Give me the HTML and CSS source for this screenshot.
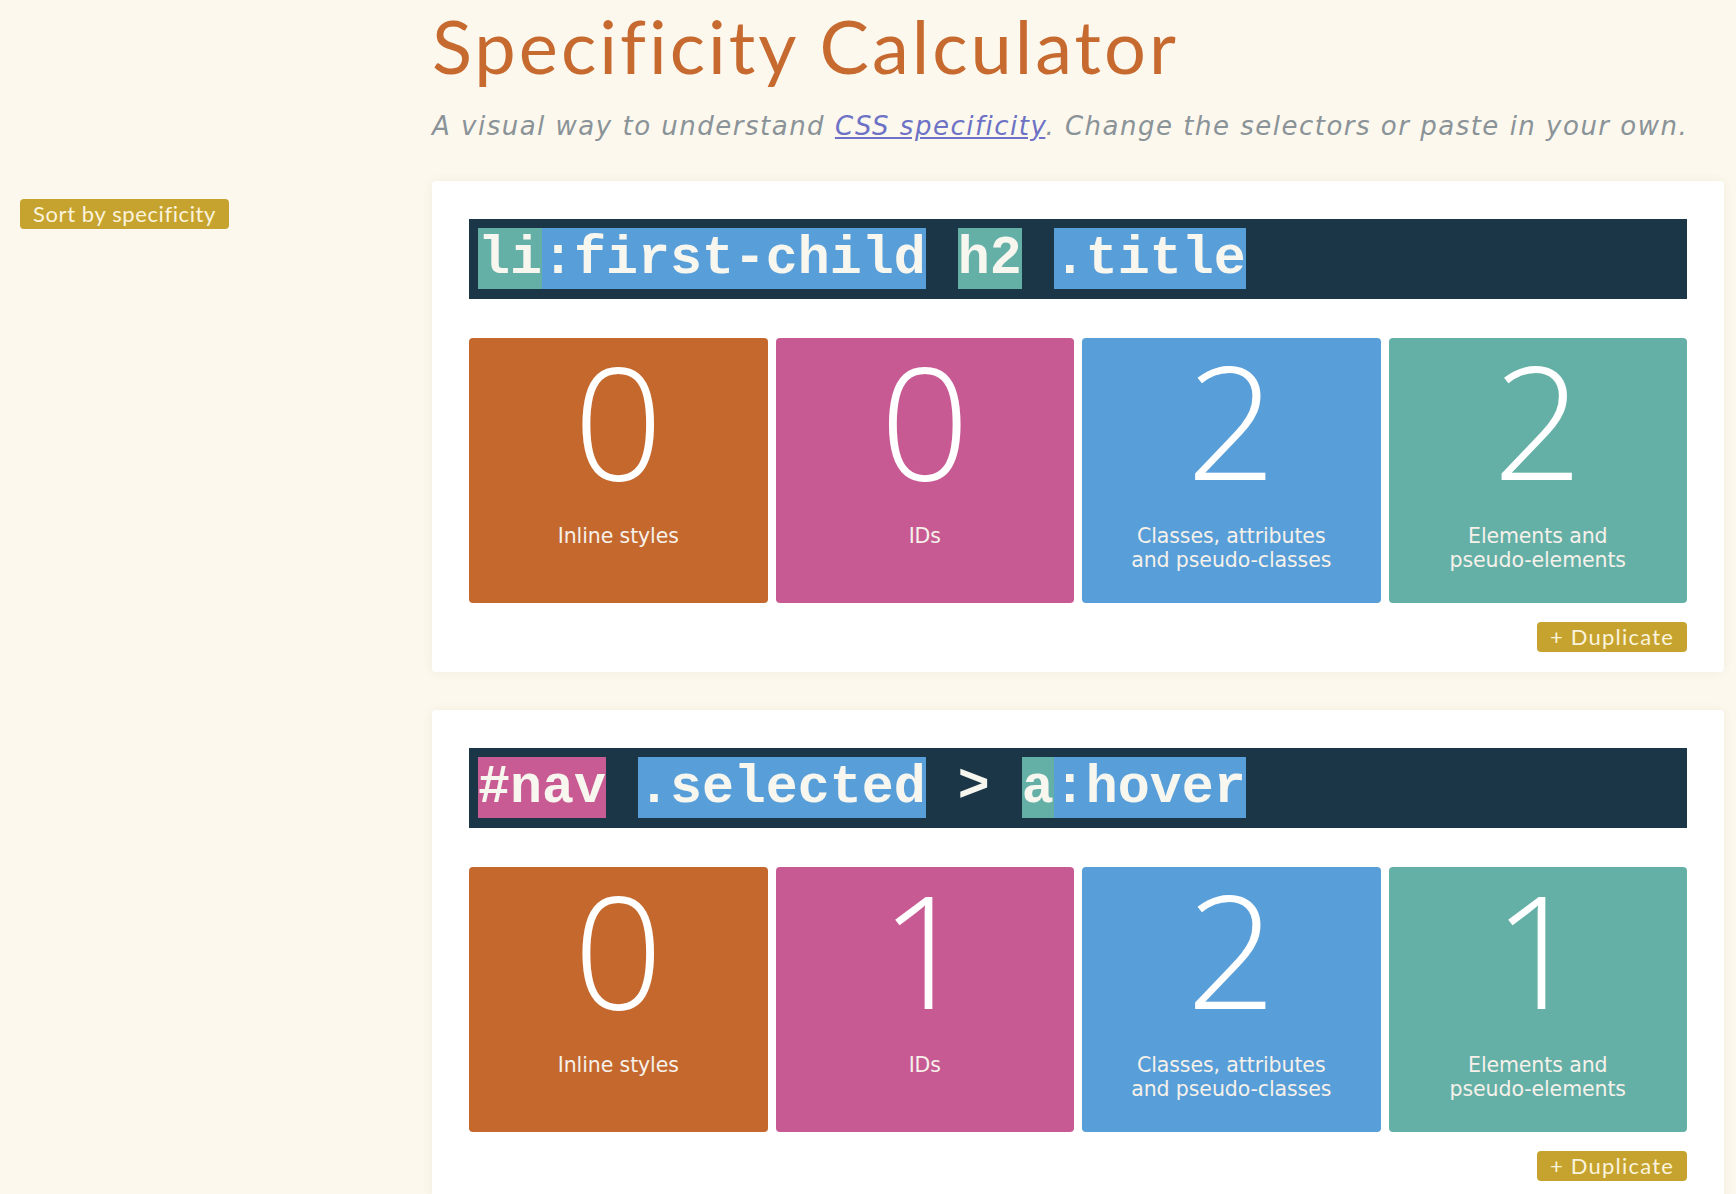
FILE: index.html
```html
<!DOCTYPE html>
<html>
<head>
<meta charset="utf-8">
<title>Specificity Calculator</title>
<link rel="stylesheet" href="styles.css">
</head>
<body>
<div class="page">
  <aside class="sidebar">
    <button class="btn sort-btn">Sort by specificity</button>
  </aside>
  <main class="main">
    <header class="header">
      <h1 class="title">Specificity Calculator</h1>
      <p class="subtitle">A visual way to understand <a href="#" class="link">CSS specificity</a>. Change the selectors or paste in your own.</p>
    </header>

    <section class="card">
      <div class="selector"><span class="hl el">li</span><span class="hl cls">:first-child</span> <span class="hl el">h2</span> <span class="hl cls">.title</span></div>
      <div class="scores">
        <div class="score inline"><div class="num">0</div><div class="label">Inline styles</div></div>
        <div class="score ids"><div class="num">0</div><div class="label">IDs</div></div>
        <div class="score classes"><div class="num">2</div><div class="label">Classes, attributes<br>and pseudo-classes</div></div>
        <div class="score elements"><div class="num">2</div><div class="label">Elements and<br>pseudo-elements</div></div>
      </div>
      <div class="actions"><button class="btn dup-btn">+ Duplicate</button></div>
    </section>

    <section class="card">
      <div class="selector"><span class="hl id">#nav</span> <span class="hl cls">.selected</span> &gt; <span class="hl el">a</span><span class="hl cls">:hover</span></div>
      <div class="scores">
        <div class="score inline"><div class="num">0</div><div class="label">Inline styles</div></div>
        <div class="score ids"><div class="num">1</div><div class="label">IDs</div></div>
        <div class="score classes"><div class="num">2</div><div class="label">Classes, attributes<br>and pseudo-classes</div></div>
        <div class="score elements"><div class="num">1</div><div class="label">Elements and<br>pseudo-elements</div></div>
      </div>
      <div class="actions"><button class="btn dup-btn">+ Duplicate</button></div>
    </section>
  </main>
</div>
</body>
</html>
```

FILE: styles.css
```css
* { box-sizing: border-box; }

html, body {
  margin: 0;
  padding: 0;
  background: #fcf8ed;
  font-family: "Lato", "Open Sans", sans-serif;
  overflow: hidden;
}

.page {
  display: grid;
  grid-template-columns: 432px 1292px;
}

.sidebar {
  padding: 199px 0 0 20px;
}

.btn {
  border: none;
  background: #c6a32f;
  color: #fbf3dc;
  border-radius: 4px;
  font-family: "Lato", "Open Sans", sans-serif;
  font-size: 22px;
  padding: 0;
  height: 30px;
  line-height: 30px;
  cursor: pointer;
  white-space: nowrap;
}

.sort-btn {
  width: 209px;
  letter-spacing: 0.6px;
}

.header {
  padding-top: 9px;
}

.title {
  margin: 0;
  font-size: 74px;
  line-height: 74px;
  font-weight: 400;
  color: #c66a30;
  letter-spacing: 3px;
}

.subtitle {
  margin: 28px 0 0 0;
  font-family: "DejaVu Sans", "Lato", sans-serif;
  font-size: 26px;
  line-height: 30px;
  font-style: italic;
  color: #8a9398;
  letter-spacing: 1.5px;
  white-space: nowrap;
}

.link {
  color: #6d72c6;
  text-decoration: underline;
}

.card {
  margin-top: 40px;
  background: #ffffff;
  border-radius: 4px;
  box-shadow: 0 0 10px rgba(120, 100, 60, 0.08);
  padding: 38px 37px 20px 37px;
}

.card + .card {
  margin-top: 38px;
}

.selector {
  background: #1a3647;
  height: 80px;
  padding: 9px 9px;
  font-family: "Liberation Mono", "Courier New", monospace;
  font-weight: 700;
  font-size: 53.3px;
  line-height: 61px;
  color: #f7f6ef;
  white-space: pre;
}

.hl {
  display: inline-block;
  height: 61px;
  line-height: 63px;
  vertical-align: top;
}

.hl.el { background: #64b0a7; }
.hl.cls { background: #589ed8; }
.hl.id { background: #c85b93; }

.scores {
  margin-top: 39px;
  display: grid;
  grid-template-columns: repeat(4, 1fr);
  gap: 8px;
}

.score {
  height: 265px;
  border-radius: 4px;
  color: #ffffff;
  display: flex;
  flex-direction: column;
  align-items: center;
  text-align: center;
}

.score.inline { background: #c4682e; }
.score.ids { background: #c75a93; }
.score.classes { background: #589ed8; }
.score.elements { background: #64b0a7; }

.num {
  margin-top: 21px;
  font-family: "Open Sans", "Lato", sans-serif;
  font-size: 157px;
  line-height: 120px;
  height: 120px;
  font-weight: 300;
}

.label {
  margin-top: 45px;
  font-family: "DejaVu Sans", "Lato", sans-serif;
  font-size: 20.5px;
  line-height: 24px;
  letter-spacing: -0.1px;
  color: #f6f1ea;
}

.actions {
  margin-top: 19px;
  display: flex;
  justify-content: flex-end;
}

.dup-btn {
  width: 150px;
  letter-spacing: 1.2px;
}
```
